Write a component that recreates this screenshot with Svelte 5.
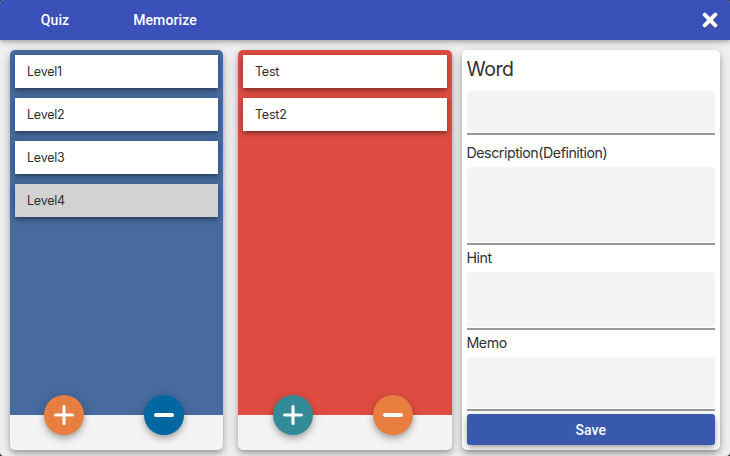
<script>
  const lists = [
    { kind: 'levels', items: ['Level1', 'Level2', 'Level3', 'Level4'], selected: 'Level4' },
    { kind: 'words', items: ['Test', 'Test2'], selected: null }
  ];
  const fields = [
    { name: 'word', label: 'Word' },
    { name: 'description', label: 'Description(Definition)' },
    { name: 'hint', label: 'Hint' },
    { name: 'memo', label: 'Memo' }
  ];
</script>

<div class="app">
  <header>
    <nav>
      <button class="tab quiz">Quiz</button>
      <button class="tab memorize">Memorize</button>
    </nav>
    <button class="close" aria-label="Close">
      <svg width="16" height="16" viewBox="0 0 16 16">
        <path d="M2.7 2.7 L13.3 13.3 M13.3 2.7 L2.7 13.3" stroke="#fff" stroke-width="4" stroke-linecap="round" />
      </svg>
    </button>
  </header>

  <main>
    {#each lists as list}
      <section class="panel {list.kind}">
        <ul>
          {#each list.items as item}
            <li class:selected={item === list.selected}>{item}</li>
          {/each}
        </ul>
        <footer>
          <button class="fab add" aria-label="Add">
            <svg width="20" height="20" viewBox="0 0 20 20">
              <path d="M10 1.6V18.4M1.6 10H18.4" />
            </svg>
          </button>
          <button class="fab remove" aria-label="Remove">
            <svg width="20" height="20" viewBox="0 0 20 20">
              <path class="bar" d="M2 10H18" />
            </svg>
          </button>
        </footer>
      </section>
    {/each}

    <form class="editor">
      {#each fields as field}
        <label class="field {field.name}">
          <span>{field.label}</span>
          <div class="box"><textarea></textarea></div>
        </label>
      {/each}
      <button class="save" type="button">Save</button>
    </form>
  </main>
</div>

<style>
  :global(body) {
    margin: 0;
    overflow: hidden;
    background: #2c2c34;
  }
  .app {
    width: 730px;
    height: 456px;
    display: flex;
    flex-direction: column;
    background: #f0f0f0;
    color: #303030;
    font-family: Inter, "Liberation Sans", sans-serif;
    border-radius: 4px;
    overflow: hidden;
  }
  .app * {
    box-sizing: border-box;
  }
  button {
    border: 0;
    padding: 0;
    margin: 0;
    color: #fff;
    font: 500 14px/20px Roboto, sans-serif;
  }
  header {
    height: 40px;
    flex: none;
    display: flex;
    align-items: center;
    justify-content: space-between;
    background: #3951b9;
    box-shadow: 0 2px 4px -1px rgba(0, 0, 0, 0.2), 0 3px 5px rgba(0, 0, 0, 0.1), 0 1px 8px rgba(0, 0, 0, 0.1);
  }
  nav {
    display: flex;
  }
  .tab {
    width: 110px;
    height: 40px;
    background: none;
    letter-spacing: 0.1px;
  }
  .close {
    width: 16px;
    height: 16px;
    margin-right: 12px;
    background: none;
    filter: drop-shadow(1px 1px 0 rgba(70, 70, 90, 0.6));
  }
  svg {
    display: block;
  }
  main {
    flex: 1;
    display: flex;
    padding: 10px 10px 6px;
  }
  .panel,
  .editor {
    height: 400px;
    border-radius: 5px;
    box-shadow: 0 3px 5px -1px rgba(0, 0, 0, 0.2), 0 5px 8px rgba(0, 0, 0, 0.14), 0 1px 12px rgba(0, 0, 0, 0.12);
  }
  .panel {
    display: flex;
    flex-direction: column;
    width: 213px;
    margin-right: 15px;
    background: #f4f4f4;
  }
  .words {
    width: 213.5px;
    margin-right: 10px;
  }
  ul {
    height: 365px;
    margin: 0;
    padding: 5px;
    display: flex;
    flex-direction: column;
    gap: 10px;
    list-style: none;
    border-radius: 5px 5px 0 0;
  }
  .levels ul {
    background: #476b9f;
  }
  .words ul {
    background: #df4d42;
  }
  li {
    height: 33px;
    padding-left: 12px;
    background: #fff;
    font-size: 12.5px;
    line-height: 34px;
    letter-spacing: -0.22px;
    box-shadow: 0 3px 3px -2px rgba(0, 0, 0, 0.2), 0 3px 4px rgba(0, 0, 0, 0.18), 0 1px 8px rgba(0, 0, 0, 0.2);
  }
  li.selected {
    background: #d2d2d2;
  }
  footer {
    height: 35px;
    display: flex;
    gap: 60px;
    padding-left: 34px;
    align-items: flex-start;
  }
  .words footer {
    padding-left: 34.5px;
  }
  .fab {
    width: 40px;
    height: 40px;
    margin-top: -20px;
    display: flex;
    align-items: center;
    justify-content: center;
    border-radius: 50%;
    box-shadow: 0 3px 5px -1px rgba(0, 0, 0, 0.2), 0 5px 8px rgba(0, 0, 0, 0.12), 0 1px 12px rgba(0, 0, 0, 0.12);
  }
  .fab svg {
    filter: drop-shadow(0.5px 0.5px 0 rgba(60, 60, 60, 0.3));
  }
  .fab path {
    stroke: #fff;
    stroke-width: 3.1;
    stroke-linecap: round;
  }
  .fab .bar {
    stroke-width: 4;
  }
  .levels .add,
  .words .remove {
    background: #e87f40;
  }
  .levels .remove {
    background: #0067a0;
  }
  .words .add {
    background: #318c98;
  }
  .editor {
    flex: 1;
    padding: 0 5px 5px;
    display: flex;
    flex-direction: column;
    background: #fff;
  }
  .field {
    display: block;
  }
  .field span {
    display: block;
    height: 27px;
    font-size: 14.2px;
    line-height: 25px;
    letter-spacing: -0.45px;
    white-space: nowrap;
  }
  .field .box {
    border-bottom: 2px solid #999;
    padding-bottom: 1px;
  }
  textarea {
    display: block;
    width: 100%;
    height: 100%;
    border: 0;
    border-radius: 3px;
    background: #f4f4f4;
    resize: none;
    outline: none;
  }
  .field.word span {
    height: 41px;
    font-size: 19.5px;
    line-height: 38px;
    letter-spacing: -0.5px;
  }
  .word .box {
    height: 44px;
    margin-bottom: 5px;
  }
  .description .box {
    height: 78px;
  }
  .hint .box {
    height: 58px;
  }
  .memo .box {
    height: 54px;
  }
  .save {
    width: 100%;
    height: 31px;
    margin-top: auto;
    border-radius: 3px;
    background: #3859ad;
    letter-spacing: 0.1px;
    box-shadow: 0 3px 5px -1px rgba(0, 0, 0, 0.2), 0 4px 8px rgba(0, 0, 0, 0.14), 0 1px 8px rgba(0, 0, 0, 0.12);
  }
</style>
